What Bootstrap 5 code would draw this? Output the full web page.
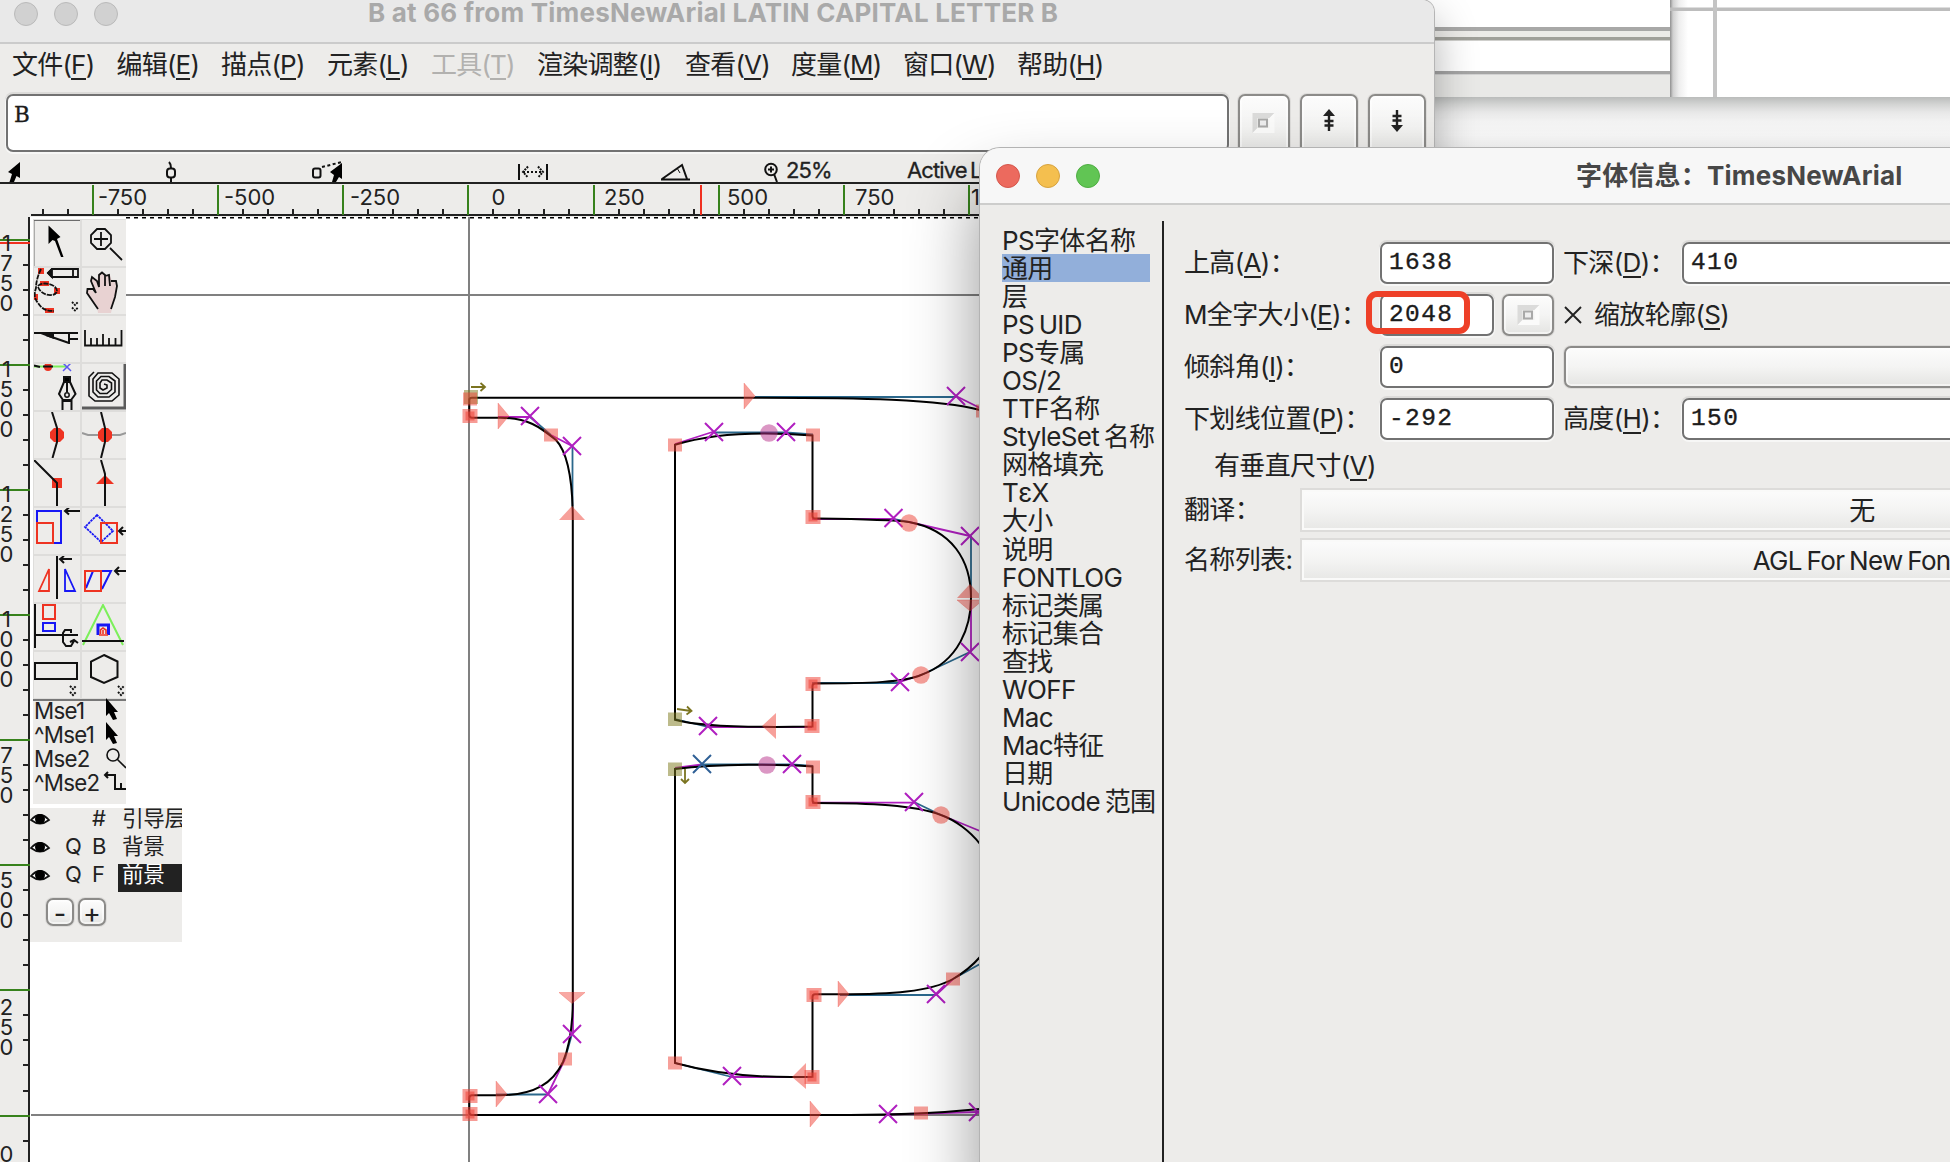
<!DOCTYPE html>
<html lang="zh-CN">
<head>
<meta charset="utf-8">
<title>字体信息：TimesNewArial</title>
<link rel="stylesheet" href="https://cdn.jsdelivr.net/npm/bootstrap@5.3.0/dist/css/bootstrap.min.css">
<style>
:root{--chrome:#edecea;--ink:#222}
body{font-family:Inter,"Noto Sans CJK SC",sans-serif;font-size:26px;line-height:28px;letter-spacing:-.65px;word-spacing:-2px;color:var(--ink);background:#f2f2f2;width:1950px;height:1162px;overflow:hidden}
.desk{width:1950px;height:1162px}
.win{position:absolute;overflow:hidden}
.win svg{display:block}
/* windows behind */
.back-a{left:1400px;top:0;width:271px;height:97px;background:#fff}
.back-b{left:1670px;top:0;width:280px;height:97px;background:linear-gradient(90deg,#8f8f8f 0,#d0d0d0 3px,#eee 9px,#fff 18px)}
.back-shade{left:1400px;top:97px;width:550px;height:60px;background:linear-gradient(#babcbb 0,#d2d3d2 7px,#e8e8e8 15px,#f5f5f5 25px,#f9f9f9 38px,#f5f5f5 52px)}
/* editor */
.editor{left:0;top:0;width:1434px;height:1162px;background:var(--chrome);border-radius:0 12px 0 0;box-shadow:0 0 0 1px #b5b5b5,0 20px 44px rgba(0,0,0,.32)}
.ed-title{height:44px;background:#e9e9e9;border-bottom:2px solid #cbcbcb;position:relative;color:#a9a9a9;font-weight:700}
.lights{gap:16px}
.lights i{width:24px;height:24px;border-radius:50%;border:1px solid #bababa;background:#d1d1d1}
.ed-title .lights{padding-left:14px;height:27px}
.ed-title .cap{position:absolute;left:368px;top:-1px;white-space:nowrap;font-size:26px;letter-spacing:.2px;word-spacing:0}
.ed-menu{height:48px;padding:6px 0 0 12px}
.ed-menu span{white-space:nowrap;line-height:30px;height:36px;letter-spacing:-.8px}
u{text-decoration:none;border-bottom:2px solid currentColor;display:inline-block;line-height:27px;height:29px}
.off{color:#b2b1af}
.entrybar{height:61px;padding:2px 0 0 6px}
.field{background:#fff;border:2px solid #727272;border-radius:7px;box-shadow:0 1px 0 1px #f7f7f6,0 -1px 0 1px #dcdbd9;font-family:"Liberation Mono",monospace;font-size:24.5px;letter-spacing:1.4px;padding-left:7px;height:42px;line-height:37px;color:#1c1c1c;-webkit-text-stroke:.35px #1c1c1c}
.keybtn{border:2px solid #8c8b89;border-radius:7px;background:linear-gradient(#fcfcfc,#f4f4f3 50%,#e4e4e2);box-shadow:0 0 0 1px #dddcda,inset 0 0 0 2px rgba(255,255,255,.55)}
.entrybar .field{width:1223px;height:58px;font-family:"DejaVu Serif",serif;font-size:21.5px;padding-left:6px;line-height:38px}
.entrybar .keybtn{height:66px;padding-top:9px}
.gtk{width:23px;height:20px}
.status{height:29px;font-size:22px;letter-spacing:-.9px;-webkit-text-stroke:.3px #222}
.status span{white-space:nowrap;padding-top:3px}
.ruler-h{height:35px}
.ruler text{font-size:22px;fill:#222;letter-spacing:0}
.work{height:945px}
.ruler-v{width:30px;height:945px}
.stage{position:relative;width:1404px;height:945px;background:#fff}
.palette{position:absolute;left:3px;top:2px;width:93px;height:585px;background:var(--chrome);overflow:hidden}
.tools{display:grid;grid-template-columns:48px 46px;grid-auto-rows:48px;border-bottom:2px solid #777}
.tools svg{outline:1px solid #dedddb;outline-offset:-1px}
.mouse{height:24px;font-size:22.3px;line-height:20px;padding-left:1px;letter-spacing:-.7px;position:relative}
.mouse svg{position:absolute;left:69px;top:-3px}
.layers{position:absolute;left:0;top:591px;width:152px;height:134px;background:var(--chrome);overflow:hidden;font-size:22px}
.layer{height:28px;letter-spacing:0;line-height:21px}
.layer svg{width:32px;flex:none}
.layer b{font-weight:400;width:25px;flex:none;position:relative;left:-1px}
.layer em{font-style:normal;white-space:nowrap;flex:none;width:64px;padding-left:4px;height:28px;letter-spacing:-.4px;font-size:21.6px}
.layer.sel em{background:#222;color:#fff}
.pm{width:28px;height:28px;line-height:28px;text-align:center;font-size:27px;letter-spacing:0}
/* dialog */
.info{left:980px;top:148px;width:1500px;height:1040px;background:var(--chrome);border-radius:20px 0 0 0;box-shadow:0 0 0 1px #b3b3b3,0 40px 70px 0 rgba(0,0,0,.43)}
.info-title{height:57px;background:#f7f7f7;border-bottom:2px solid #cdcdcc;position:relative;color:#474747}
.info-title .lights{padding-left:16px;height:56px}
.info-title .cap{position:absolute;left:596px;top:14px;font-weight:700;font-size:26px;letter-spacing:.2px;white-space:nowrap}
.c-r{background:#ec6a5e!important;border-color:#d4574c!important}.c-y{background:#f4bf4f!important;border-color:#d7a340!important}.c-g{background:#61c554!important;border-color:#4fae43!important}
.cats{width:182px;padding:21px 0 0 22px;height:940px;flex:none}
.cats div{height:28.05px;line-height:30px;width:148px;white-space:nowrap}
.cats .on{background:#92afda}
.sep{width:2px;background:#222;margin-top:16px;height:941px;flex:none}
.form-area{padding:37px 0 0 20px;width:1260px}
.line{height:52px;white-space:nowrap}
.lab{width:196px;line-height:42px;flex:none}
.lab2{width:119px;line-height:42px;flex:none;margin-left:9px}
.drop{height:44px;width:1134px;border:2px solid #dddcda;box-shadow:inset 0 0 0 2px #fafaf9;background:linear-gradient(#fcfcfc,#f4f4f3 50%,#e7e7e5);text-align:center;line-height:42px}
.ring{position:absolute;left:386px;top:143px;width:104px;height:43px;border:6px solid #ee4028;border-radius:11px}
</style>
<script src="https://cdn.jsdelivr.net/npm/bootstrap@5.3.0/dist/js/bootstrap.bundle.min.js"></script>
</head>
<body>
<div class="desk position-relative overflow-hidden">
  <div class="win back-shade"></div>
  <div class="win back-a"><svg width="271" height="97"><rect y="27" width="271" height="4" fill="#a8a8a7"/><rect y="31" width="271" height="6" fill="#ecebe8"/><rect y="37" width="271" height="3.5" fill="#a0a09a"/><rect y="71" width="271" height="3.5" fill="#a5a5a5"/><rect y="75" width="271" height="22" fill="#e9e9e7"/></svg></div>
  <div class="win back-b"><svg width="280" height="97"><rect y="7.5" width="280" height="3.5" fill="#bdbdbd"/><rect x="43" width="4" height="97" fill="#c4c4c4"/></svg></div>

  <section class="win editor">
    <header class="ed-title"><div class="lights d-flex align-items-center"><i></i><i></i><i></i></div><span class="cap">B at 66 from TimesNewArial LATIN CAPITAL LETTER B</span></header>
    <nav class="ed-menu d-flex">
      <span style="width:104.5px">文件(<u>F</u>)</span><span style="width:104.5px">编辑(<u>E</u>)</span><span style="width:106px">描点(<u>P</u>)</span><span style="width:104px">元素(<u>L</u>)</span><span class="off" style="width:106px">工具(<u>T</u>)</span><span style="width:148px">渲染调整(<u>I</u>)</span><span style="width:106px">查看(<u>V</u>)</span><span style="width:112px">度量(<u>M</u>)</span><span style="width:114px">窗口(<u>W</u>)</span><span>帮助(<u>H</u>)</span>
    </nav>
    <div class="entrybar d-flex">
      <div class="field">B</div>
      <div class="keybtn d-flex justify-content-center" style="width:52px;margin-left:8.5px"><svg class="gtk mt-2" viewBox="0 0 22 20"><path d="M0 20V0H22L17 5H5V15Z" fill="#dbdbda"/><path d="M22 0V20H0L5 15H17V5Z" fill="#fbfbfa"/><rect x="6.500" y="6.500" width="8" height="7" fill="#eee" stroke="#a9a9a8" stroke-width="2"/></svg></div>
      <div class="keybtn d-flex justify-content-center" style="width:58px;margin-left:10px"><svg width="14" height="24" viewBox="0 0 14 24" class="mt-1"><path d="M7 4V22M2.500 12H11.500M2.500 16.500H11.500" stroke="#222" stroke-width="2.400"/><path d="M7 0L13 7H1Z" fill="#222"/></svg></div>
      <div class="keybtn d-flex justify-content-center" style="width:58px;margin-left:10px"><svg width="14" height="24" viewBox="0 0 14 24" class="mt-1"><path d="M7 1V18M2.500 7H11.500M2.500 11.500H11.500" stroke="#222" stroke-width="2.400"/><path d="M7 23L13 16H1Z" fill="#222"/></svg></div>
    </div>
    <div class="status d-flex">
      <svg width="786" height="29" viewBox="0 153 786 29" fill="none" stroke="#111" stroke-width="2" class="flex-shrink-0">
        <path d="M20 162V178L16.500 176L14 182H9.500L12 174L8 172Z" fill="#000" stroke="none"/>
        <path d="M169 162Q171 164 171 168M171 178V182"/><rect x="167" y="168.500" width="8" height="9" rx="3"/>
        <rect x="313" y="168.500" width="7.500" height="9" rx="2"/><path d="M322 167L342 162" stroke-dasharray="3 2.500"/><path d="M342 163V179L339 177L336 182H332L334 175L330 172Z" fill="#000" stroke="none"/>
        <path d="M519 164V180M547 164V180" /><path d="M523 172H543" stroke-dasharray="2 2"/><path d="M528 166.500L523 172L528 177.500M538 166.500L543 172L538 177.500" stroke-dasharray="2 1"/>
        <path d="M661 179.500H690M662 179L682 165L687 179"/><path d="M677 168L680 173" stroke-width="1"/>
        <circle cx="771" cy="169.500" r="5.800"/><path d="M768 169.500H774M771 166.500V172.500M774 174L777 182"/>
      </svg><span style="width:121px">25%</span><span>Active Layer</span>
    </div>
    <svg class="ruler ruler-h" width="1434" height="35" viewBox="0 182 1434 35">
      <path d="M0 183H1434M31 215H1434" stroke="#222" stroke-width="2"/>
      <path id="hMinor" stroke="#222" stroke-width="2"/><path id="hMajor" stroke="#37821c" stroke-width="2"/>
      <path d="M701 185V215" stroke="#f03020" stroke-width="2"/>
      <g><text x="98" y="204.500">-750</text><text x="224" y="204.500">-500</text><text x="350" y="204.500">-250</text><text x="491.500" y="204.500">0</text><text x="604" y="204.500">250</text><text x="727" y="204.500">500</text><text x="855" y="204.500">750</text><text x="971" y="204.500">1000</text></g>
    </svg>
    <div class="work d-flex">
      <svg class="ruler ruler-v flex-shrink-0" width="30" height="945" viewBox="0 217 30 945">
        <path d="M29 217V1162" stroke="#222" stroke-width="2"/>
        <path id="vMinor" stroke="#222" stroke-width="2"/><path id="vMajor" stroke="#37821c" stroke-width="2"/>
        <path d="M0 243H30" stroke="#f03020" stroke-width="2"/>
        <g id="vText" text-anchor="middle"></g>
      </svg>
      <div class="stage">
        <svg width="1404" height="945" viewBox="30 217 1404 945" fill="none">
          <path d="M126 217.500H1434" stroke="#000" stroke-width="2" stroke-dasharray="4 4"/>
          <path d="M469 217V1162M126 295H1434M31 1115H1434" stroke="#808080" stroke-width="2"/>
          <defs>
            <path id="x" d="M-9 -9L9 9M9 -9L-9 9" stroke-width="2"/>
            <rect id="s" x="-7" y="-6.500" width="14" height="13" fill="#ef4136" fill-opacity=".5"/>
            <g id="d"><rect x="-7.500" y="-7" width="15" height="14" fill="#ef4136" fill-opacity=".52"/><rect x="-4.500" y="-4.500" width="9" height="9" fill="#ef4136" fill-opacity=".55"/></g>
            <path id="r" d="M-5 -13L6 0L-5 13Z" fill="#ef4136" fill-opacity=".5" stroke="#ef4136" stroke-opacity=".25"/>
            <path id="up" d="M-13 7H13L0 -7Z" fill="#ef4136" fill-opacity=".5"/>
            <path id="dn" d="M-13 -5.500H13L0 5.500Z" fill="#ef4136" fill-opacity=".45" stroke="#ef4136" stroke-opacity=".3"/>
          </defs>
          <g stroke="#2b688c" stroke-width="1.800">
            <path d="M755 397H956M530 417L551 435M572.500 446V506M714 432.500H786L813 434.500M893 519L909 522M971 536V598M970 652L921 675M812 683H900M675 719L708 727M702 764.500H792L813 766M914 802L941 815M812 803H850M572 1034L565 1059M496 1094.500H548M840 995H936M953 979L980 964M675 1063L732 1077"/>
          </g>
          <g stroke="#b01fc0" stroke-width="1.800">
            <path d="M956 396L980 408M498 417H530M551 435L572 446M675 444L714 431.500M812 519H893M909 522L970 536M971 600V652M900 682L921 675M708 727H812M675 768L702 764.500M812 802.700H914M941 815L980 831M573 992V1034M565 1059L548 1094M936 995L953 979M732 1077H812M888 1114.500L978 1112"/>
          </g>
          <g stroke="#000" stroke-width="2">
            <path d="M980 410C940 399 860 397.700 754 397.700H472Q469.300 397.700 469.300 400V415Q469.300 417.700 472 417.700H500C528 417.700 540 427 556 440C570 455 572.800 490 572.800 520V1000C572.800 1025 570 1045 563 1062C553 1083 535 1095 500 1095.300H472Q469.300 1095.300 469.300 1098V1112Q469.300 1115 472 1115H850C900 1115 940 1113 980 1109"/>
            <path d="M675 444.700V719.700C700 727 760 727.500 812.500 726.500V686Q812.500 683.500 815 683.500C870 683.500 905 682 921 675C960 661 971 625 971 598C971 560 952 530 909 522C890 519.500 850 519 815 518.500Q812.500 518.500 812.500 516V435.500C770 432 720 431 675 444.700Z"/>
            <path d="M675 769V1063C715 1074 760 1078.500 812.500 1076.700V997Q812.500 994.300 815 994.300H840C890 994.300 930 992 953 979C965 972 973 965 980 957C1010 920 1010 880 980 844C970 831 955 820 941 815C915 805 870 803 815 803Q812.500 803 812.500 800V766.500C780 764 720 763.500 675 769Z"/>
          </g>
          <g stroke="#b01fc0"><use href="#x" x="530" y="416"/><use href="#x" x="572" y="446"/><use href="#x" x="956" y="396"/><use href="#x" x="714" y="432"/><use href="#x" x="786" y="432"/><use href="#x" x="893.500" y="518"/><use href="#x" x="970" y="536"/><use href="#x" x="970" y="652"/><use href="#x" x="900" y="682"/><use href="#x" x="708" y="726"/><use href="#x" x="702" y="764" stroke="#2f6096"/><use href="#x" x="792" y="764"/><use href="#x" x="914" y="802"/><use href="#x" x="572" y="1034"/><use href="#x" x="548" y="1094"/><use href="#x" x="936" y="994"/><use href="#x" x="732" y="1076"/><use href="#x" x="888" y="1114"/><use href="#x" x="978" y="1112"/></g>
          <g fill="#807c20" fill-opacity=".52"><rect x="464" y="390" width="14" height="14"/><rect x="668" y="712.500" width="14" height="13.500"/><rect x="668" y="762.500" width="14" height="13.500"/></g>
          <use href="#s" x="470" y="399"/><use href="#d" x="470" y="416"/><use href="#s" x="551" y="435"/><use href="#s" x="675" y="445"/><use href="#s" x="813" y="435"/><use href="#d" x="813" y="517"/><use href="#d" x="813" y="684"/><use href="#d" x="812" y="726"/><use href="#s" x="983" y="411"/><use href="#s" x="813" y="767"/><use href="#d" x="813" y="802"/><use href="#s" x="565" y="1059"/><use href="#d" x="470" y="1096"/><use href="#d" x="470" y="1114"/><use href="#s" x="953" y="979"/><use href="#d" x="814" y="995"/><use href="#s" x="675" y="1063"/><use href="#d" x="812" y="1077"/><use href="#s" x="921" y="1113"/>
          <g fill-opacity=".5"><circle cx="769" cy="433" r="8.700" fill="#b83089"/><circle cx="767" cy="765" r="8.700" fill="#b83089"/><circle cx="909" cy="523" r="8.700" fill="#ef4136"/><circle cx="921" cy="675" r="8.700" fill="#ef4136"/><circle cx="941" cy="815" r="8.700" fill="#ef4136"/></g>
          <use href="#r" x="749" y="396"/><use href="#r" x="503" y="416"/><use href="#r" x="501" y="1094"/><use href="#r" x="843" y="994"/><use href="#r" x="815" y="1114"/>
          <path d="M776 713V739L762 726ZM806 1063V1089L792 1077Z" fill="#ef4136" fill-opacity=".5"/>
          <use href="#up" x="572" y="513"/><use href="#up" x="970" y="591"/><use href="#dn" x="970" y="605.500"/><use href="#dn" x="572" y="998"/>
          <path d="M471 387H485M480.500 383L485 387L480.500 391M677 709L691 711M687 706.500L691.500 711L686.500 714.500M685 769V783M681 779L685 783L689 779" stroke="#7b7420" stroke-width="1.800"/>
        </svg>

        <aside class="palette">
          <div class="tools" >
            <svg viewBox="33 219 48 48"><path d="M33.500 267V220H81" fill="none" stroke="#6c6c6c" stroke-width="2"/><path d="M48.500 225.500V244L52.500 240L55 241L61 257H63.500L57 239L60.500 237Z"/></svg>
            <svg viewBox="81 219 46 48" fill="none" stroke="#111" stroke-width="1.800"><path d="M97 229H105L111 235V243L105 249H97L91 243V235ZM94 239H108M101 232V246M110 248L122 260"/></svg>
            <svg viewBox="33 267 48 48" fill="none" stroke="#111" stroke-width="1.800"><g fill="#ee3322" stroke="none"><path d="M38 268h6v6H38zM40 281h9v5h-9zM54 288h6v6h-6zM34 294h4v6H34zM45 308h9v5h-9z"/></g><path d="M41 269C38 275 36 282 36 288C34 294 34 298 38 303C42 309 46 311 54 311M38 286C42 281 57 284 57 291C56 297 42 297 38 287" stroke-dasharray="5 1"/><path d="M52 269H78V277H52L48 273ZM73 269V277"/><path d="M48 273L52 269V277Z" fill="#111"/><path d="M72 302L75 305L78 302M72 307.500L75 310.500L78 307.500" stroke-dasharray="2 1"/></svg>
            <svg viewBox="81 267 46 48"><path d="M98 313L97 306L87 293L88 289L93 291L96 294L91 281L93 277L97 281L98 275L102 272L106 276L110 275L112 281L117 282V290L113 303L111 313Z" fill="#e8d2d2"/><path d="M98 309L87 293L87.500 289L93 289L96 293M96 293L91 281L92 277L97 281L99 287V275L102 272.500L105 275V286M105 276L109 275L110 286M111 281L116 281L117 286L115 297L111 309" fill="none" stroke="#111" stroke-width="1.800"/></svg>
            <svg viewBox="33 315 48 48" fill="none" stroke="#111" stroke-width="2"><path d="M34 333H78M69 333V344M69 339H78M69 343L46 335"/><path d="M38 333L54 339V334Z" fill="#111" stroke="none"/></svg>
            <svg viewBox="81 315 46 48" fill="none" stroke="#111" stroke-width="1.800"><path d="M85 330V345.500H121.500V330M91 345V338M97 345V338M103 345V334M109 345V338M115.500 345V338"/></svg>
            <svg viewBox="33 363 48 48" fill="none" stroke="#111" stroke-width="2"><path d="M34 366.500H66" stroke="#7cf05a"/><circle cx="48" cy="367" r="4" fill="#ee3322" stroke="none"/><path d="M34 365.500L40 367M43 366.500H53"/><path d="M63 363L71 371M71 363L63 371" stroke="#5a5af0" stroke-width="1.500"/><path d="M64 377H70V382H64Z" fill="#000"/><path d="M64 382L59 394L63 400H71L75.500 394L70 382M67 382V392M62.500 410V401H71.500V410"/><circle cx="67" cy="395" r="2.200" stroke-width="1.500"/></svg>
            <svg viewBox="81 363 46 48" fill="none" stroke="#111" stroke-width="1.600"><path d="M82 408H125V363" stroke="#5c5c5c" stroke-width="3"/><path d="M94 372L89 377V396L95 401H112L119 395V379L112 373H98L93 379V392L98 397H109L115 392V381L109 376.500H101L96.500 381V390L100 393.500H107L111.500 389.500V383L107 380H102L100 383V388L103 390L107 388V385L104 384"/></svg>
            <svg viewBox="33 411 48 48" fill="none" stroke="#111" stroke-width="2"><path d="M54 428H60L64 432V438L60 442H54L50 438V432Z" fill="#ee3322" stroke="none"/><path d="M52 412L57 428V442L52.500 458"/></svg>
            <svg viewBox="81 411 46 48" fill="none" stroke="#111" stroke-width="2"><path d="M82 433L88 435H120L126 433" stroke="#999"/><path d="M102 428H108L112 432V438L108 442H102L98 438V432Z" fill="#ee3322" stroke="none"/><path d="M101 412L105 428V442L101 458"/></svg>
            <svg viewBox="33 459 48 48" fill="none" stroke="#111" stroke-width="2"><path d="M52 478H62V488H52Z" fill="#ee3322" stroke="none"/><path d="M34 460L57 483V506" /></svg>
            <svg viewBox="81 459 46 48" fill="none" stroke="#111" stroke-width="2"><path d="M105 475L114 484H96Z" fill="#ee3322" stroke="none"/><path d="M101 460L105 474V506"/></svg>
            <svg viewBox="33 507 48 48" fill="none" stroke-width="2"><path d="M37 511H61V543H37Z" stroke="#1717f5"/><path d="M37 523H53V543H37Z" stroke="#ee3322"/><path d="M65 511H80M69 507.500L65 511L69 514.500" stroke="#111"/></svg>
            <svg viewBox="81 507 46 48" fill="none" stroke-width="2"><path d="M97 515L85 527L101 542L113 531Z" stroke="#1717f5" stroke-dasharray="2.500 .8" stroke-width="1.800"/><path d="M101 523H117V543H101Z" stroke="#ee3322"/><path d="M119 531H127M123 527L119 531L123 535" stroke="#111"/></svg>
            <svg viewBox="33 555 48 48" fill="none" stroke-width="2"><path d="M57 556V599M60 559H72M64 556L60 559L64 563" stroke="#111"/><path d="M49 569V591H39Z" stroke="#ee3322" stroke-width="1.800"/><path d="M65 569V591H75Z" stroke="#1717f5" stroke-width="1.800"/></svg>
            <svg viewBox="81 555 46 48" fill="none" stroke-width="2"><path d="M93 571L86 588M93 571H111L102 589" stroke="#1717f5"/><path d="M85 571H101V591H85Z" stroke="#ee3322"/><path d="M115 571H127M119 567L115 571L119 575" stroke="#111"/></svg>
            <svg viewBox="33 603 48 48" fill="none" stroke-width="2"><path d="M35 604V648M34 635H78" stroke="#111"/><path d="M43 605H55V619H43Z" stroke="#ee3322"/><path d="M43 623H55V631H43Z" stroke="#1717f5"/><path d="M71 633V630H65L63 633V642L66 646H71L74 641M70 642L74 640L78 643" stroke="#111"/></svg>
            <svg viewBox="81 603 46 48" fill="none" stroke-width="2"><path d="M83 645L103 605L123 645" stroke="#7cf05a"/><path d="M82 641H124" stroke="#111"/><path d="M98 635V625H108.500V635" stroke="#1717f5" stroke-width="3"/><path d="M99 635H108M100.500 634V630L103 628L106 630V634M103 630V634" stroke="#ee3322" stroke-width="1.600"/></svg>
            <svg viewBox="33 651 48 48" fill="none" stroke="#111" stroke-width="2"><path d="M35 663H77V679H35Z"/><path d="M70 686L73 689L76 686M70 692L73 695L76 692" stroke-dasharray="2 1"/></svg>
            <svg viewBox="81 651 46 48" fill="none" stroke="#111" stroke-width="2"><path d="M104 655L117.500 661.500V677L104 683L91 677V661.500Z"/><path d="M118 686L121 689L124 686M118 692L121 695L124 692" stroke-dasharray="2 1"/></svg>
          </div>
          <div class="mouse">Mse1<svg width="24" height="24"><path d="M4 0V18L7 15L11 22L15 21L12 14H16Z"/></svg></div>
          <div class="mouse">^Mse1<svg width="24" height="24"><path d="M4 0V18L7 15L11 22L15 21L12 14H16Z"/></svg></div>
          <div class="mouse">Mse2<svg width="24" height="24" fill="none" stroke="#111" stroke-width="1.600"><circle cx="11" cy="9" r="6"/><path d="M15 13L24 22"/></svg></div>
          <div class="mouse">^Mse2<svg width="24" height="24" fill="none" stroke="#111" stroke-width="2"><path d="M3 5H13V19H24M6 2L3 5L6 8M19 19V13"/></svg></div>
        </aside>
        <aside class="layers">
          <div class="layer d-flex"><svg width="32" height="22"><path d="M1 12Q10 2 19 12Q10 19 1 12Z" fill="#fff" stroke="#111" stroke-width="1.800"/><circle cx="10" cy="11" r="5"/></svg><b style="width:31px"></b><b>#</b><em>引导层</em></div>
          <div class="layer d-flex"><svg width="32" height="22"><path d="M1 12Q10 2 19 12Q10 19 1 12Z" fill="#fff" stroke="#111" stroke-width="1.800"/><circle cx="10" cy="11" r="5"/></svg><b style="width:31px;padding-left:4px">Q</b><b>B</b><em>背景</em></div>
          <div class="layer sel d-flex"><svg width="32" height="22"><path d="M1 12Q10 2 19 12Q10 19 1 12Z" fill="#fff" stroke="#111" stroke-width="1.800"/><circle cx="10" cy="11" r="5"/></svg><b style="width:31px;padding-left:4px">Q</b><b>F</b><em>前景</em></div>
          <div class="d-flex" style="gap:4px;padding:6px 0 0 16px"><div class="keybtn pm">-</div><div class="keybtn pm">+</div></div>
        </aside>
      </div>
    </div>
  </section>

  <section class="win info">
    <header class="info-title"><div class="lights d-flex align-items-center"><i class="c-r"></i><i class="c-y"></i><i class="c-g"></i></div><span class="cap">字体信息：TimesNewArial</span></header>
    <div class="d-flex">
      <div class="cats"><div>PS字体名称</div><div class="on">通用</div><div>层</div><div>PS UID</div><div>PS专属</div><div>OS/2</div><div>TTF名称</div><div>StyleSet 名称</div><div>网格填充</div><div>TεX</div><div>大小</div><div>说明</div><div>FONTLOG</div><div>标记类属</div><div>标记集合</div><div>查找</div><div>WOFF</div><div>Mac</div><div>Mac特征</div><div>日期</div><div>Unicode 范围</div></div>
      <div class="sep"></div>
      <div class="form-area">
        <div class="line d-flex"><span class="lab">上高(<u>A</u>)：</span><div class="field" style="width:174px">1638</div><span class="lab2">下深(<u>D</u>)：</span><div class="field" style="width:740px">410</div></div>
        <div class="line d-flex"><span class="lab">M全字大小(<u>E</u>)：</span><div class="field" style="width:114px">2048</div><div class="keybtn d-flex justify-content-center align-items-center" style="width:52px;height:42px;margin-left:8px"><svg class="gtk" viewBox="0 0 22 20"><path d="M0 20V0H22L17 5H5V15Z" fill="#dbdbda"/><path d="M22 0V20H0L5 15H17V5Z" fill="#fbfbfa"/><rect x="6.500" y="6.500" width="8" height="7" fill="#eee" stroke="#a9a9a8" stroke-width="2"/></svg></div><svg width="18" height="18" style="margin:12px 12px 0 10px" class="flex-shrink-0"><path d="M1 1L17 17M17 1L1 17" stroke="#222" stroke-width="1.900"/></svg><span style="line-height:42px">缩放轮廓(<u>S</u>)</span></div>
        <div class="line d-flex"><span class="lab">倾斜角(<u>I</u>)：</span><div class="field" style="width:174px">0</div><div class="keybtn" style="width:860px;height:42px;margin-left:10px"></div></div>
        <div class="line d-flex" style="height:50px"><span class="lab">下划线位置(<u>P</u>)：</span><div class="field" style="width:174px">-292</div><span class="lab2">高度(<u>H</u>)：</span><div class="field" style="width:740px">150</div></div>
        <div style="height:40px;line-height:36px;padding-left:30px">有垂直尺寸(<u>V</u>)</div>
        <div class="d-flex" style="height:50px"><span style="width:116px;line-height:44px" class="flex-shrink-0">翻译：</span><div class="drop">无</div></div>
        <div class="d-flex" style="height:50px"><span style="width:116px;line-height:44px" class="flex-shrink-0">名称列表:</span><div class="drop">AGL For New Fonts</div></div>
      </div>
    </div>
    <div class="ring"></div>
  </section>
</div>
<script>
let hm='',hM='',vm='',vM='',vt='';
for(let k=-3;k<45;k++){const x=Math.round(93.5+25.03*k-.5);if(((k%5)+5)%5===0){if(x>31)hM+=`M${x} 185V215`}else if(x>40)hm+=`M${x} 209V215`}
for(let k=0;k<37;k++){const y=Math.round(239.5+25.03*k);if(k%5===0)vM+=`M0 ${y}H30`;else vm+=`M23 ${y}H29`}
[['1750',251],['1500',377],['1250',502],['1000',627],['750',763],['500',888.5],['250',1015],['0',1162]].forEach(([s,y])=>{[...s].forEach((c,i)=>{vt+=`<text x="6.500" y="${y+20*i-.5}">${c}</text>`})});
hMinor.setAttribute('d',hm);hMajor.setAttribute('d',hM);vMinor.setAttribute('d',vm);vMajor.setAttribute('d',vM);vText.innerHTML=vt;
</script>
</body>
</html>
